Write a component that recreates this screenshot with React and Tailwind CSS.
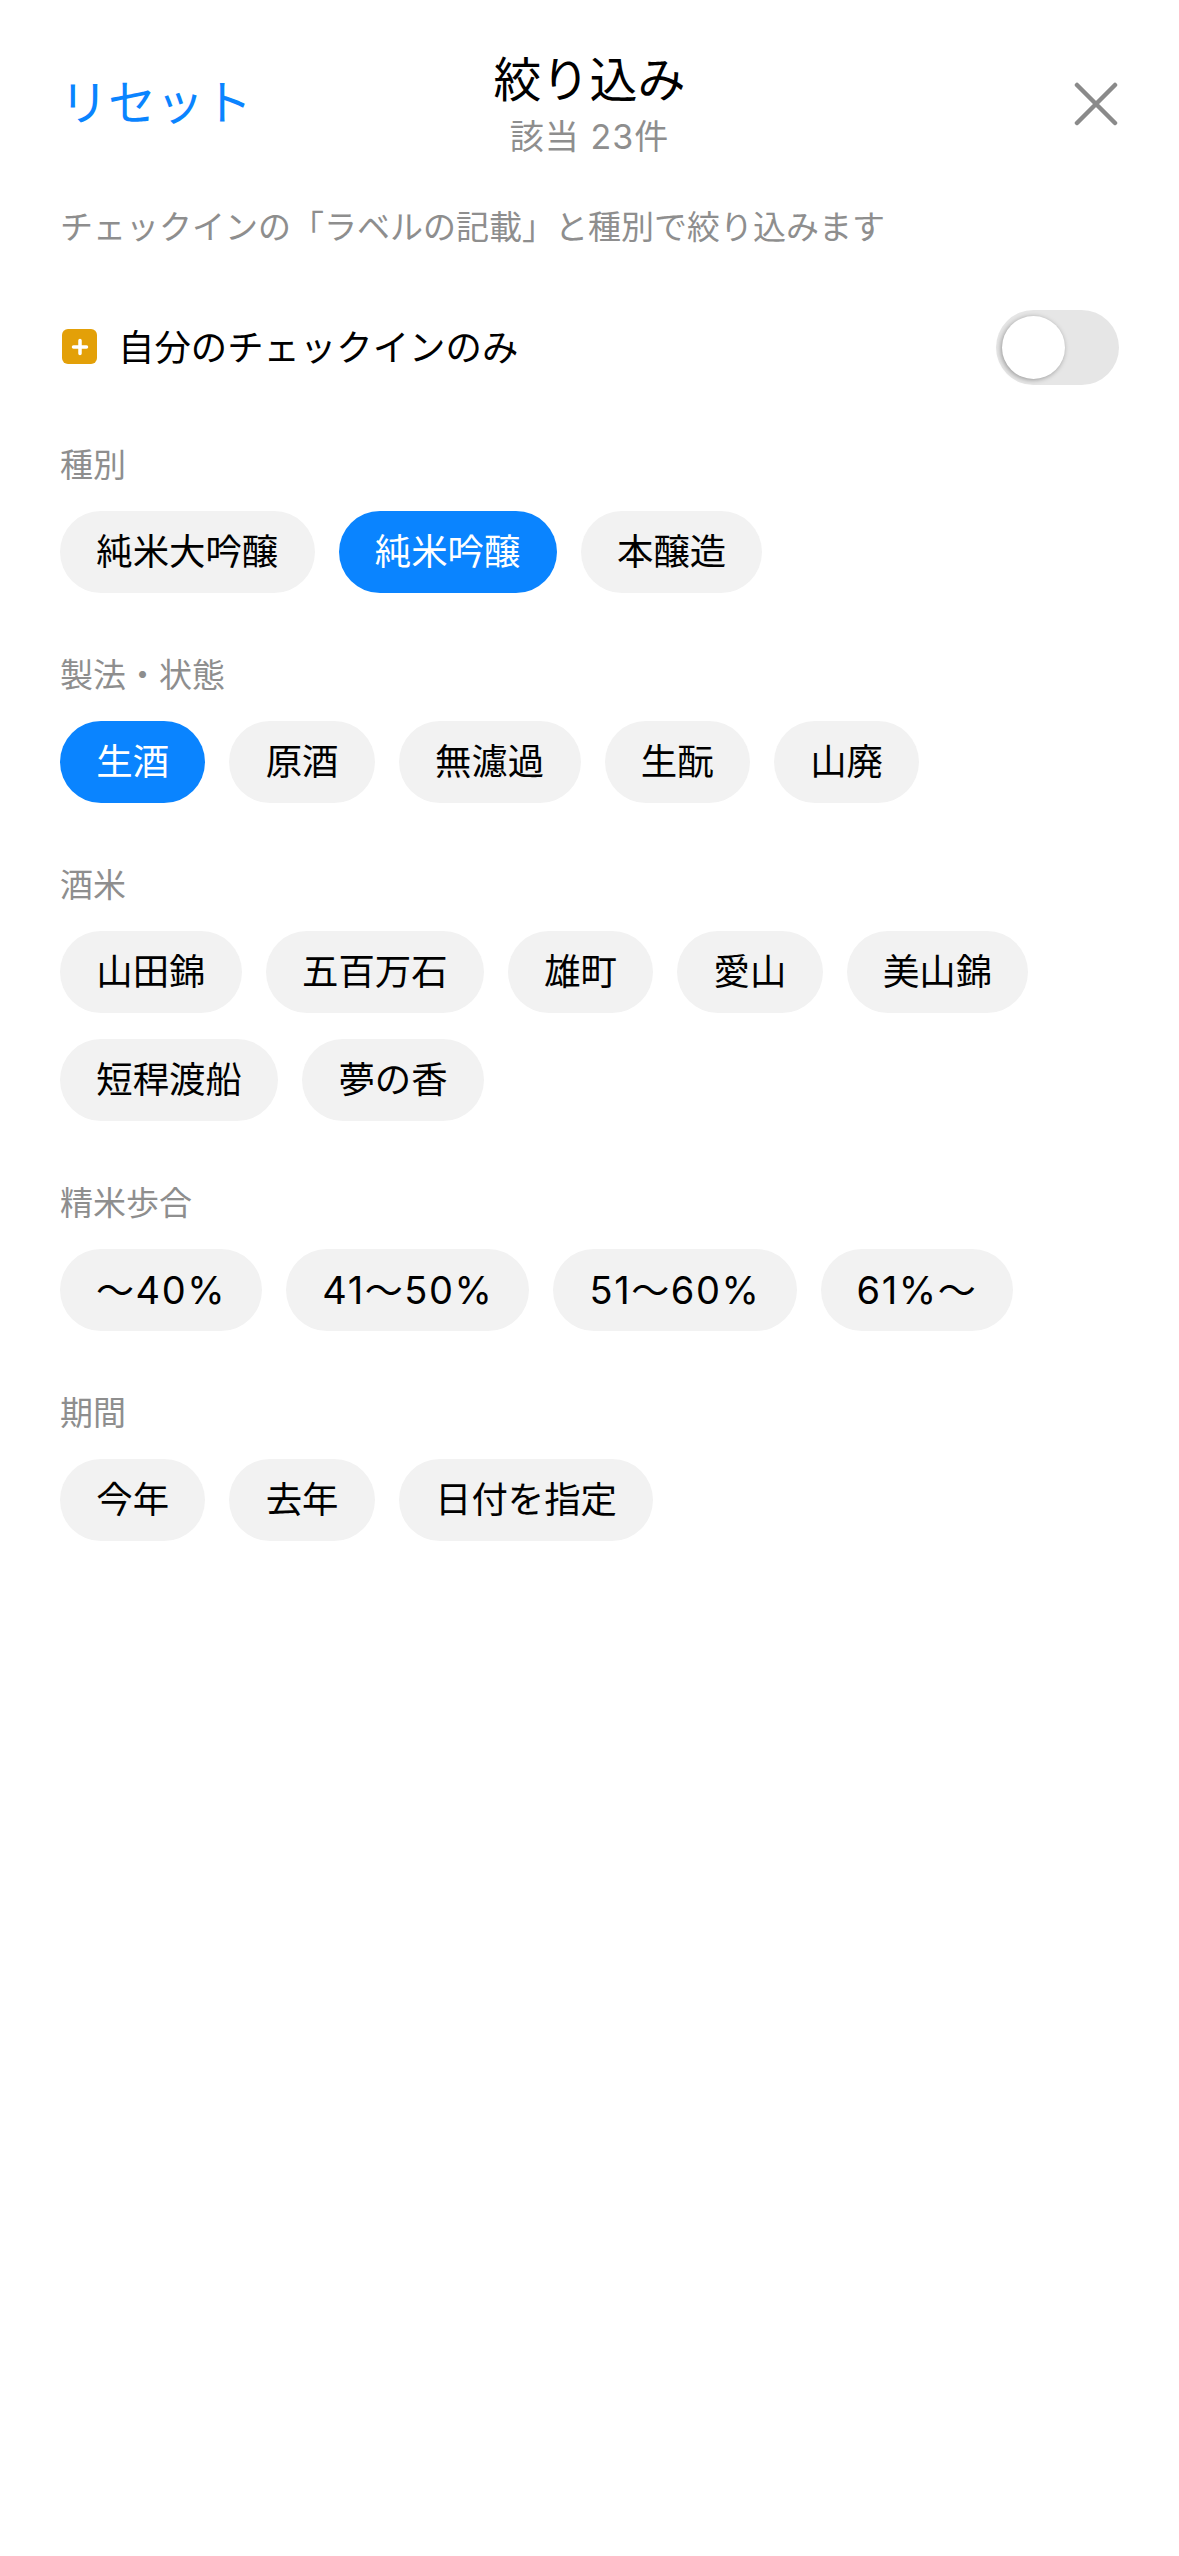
const sections = [
  { title: '種別', rows: ['純米大吟醸', '純米吟醸', '本醸造'], active: '純米吟醸' },
  { title: '製法・状態', rows: ['生酒', '原酒', '無濾過', '生酛', '山廃'], active: '生酒' },
  { title: '酒米', rows: ['山田錦', '五百万石', '雄町', '愛山', '美山錦', '短稈渡船', '夢の香'] },
  { title: '精米歩合', rows: ['～40%', '41～50%', '51～60%', '61%～'] },
  { title: '期間', rows: ['今年', '去年', '日付を指定'] },
];

function Chip({ label, active }) {
  const numeric = /\d/.test(label);
  return (
    <button type="button" className={`h-[82px] rounded-full leading-[82px] ${
      numeric ? 'px-[36px] text-[38px] tracking-[1.6px]' : 'px-[36.3px] text-[36.4px]'} ${
      active ? 'bg-[#0a84ff] text-white' : 'bg-[#f2f2f2] text-black'}`}>
      {label}
    </button>
  );
}

export default function App() {
  return (
    <div className="w-[1179px] h-[2556px] bg-white px-[60px] pt-[48px] font-['Inter','Noto_Sans_CJK_JP',sans-serif]">
      <header className="relative h-[112px] flex items-start justify-between">
        <button type="button" className="mt-[26px] text-[#0a84ff] text-[48px] leading-[58px]">リセット</button>
        <div className="absolute inset-x-0 top-0 flex flex-col items-center">
          <h1 className="mt-[2px] text-[48px] leading-[60px] text-black">絞り込み</h1>
          <p className="mt-[6px] text-[34px] leading-[42px] tracking-[1px] text-[#8e8e8e]">該当 23件</p>
        </div>
        <svg className="mt-[34px] mr-[1px]" width="44" height="44" viewBox="0 0 44 44">
          <path d="M3 3l38 38M41 3L3 41" stroke="#8a8a8a" strokeWidth="4.5" strokeLinecap="round" fill="none" />
        </svg>
      </header>

      <p className="mt-[43px] text-[33px] leading-[48px] text-[#8e8e8e]">
        チェックインの「ラベルの記載」と種別で絞り込みます
      </p>

      <div className="mt-[59px] h-[75px] flex items-center justify-between">
        <div className="flex items-center gap-[21px]">
          <span className="w-[35px] h-[35px] ml-[2px] mb-[2px] rounded-[6px] bg-[#e3a008] flex items-center justify-center">
            <svg width="18" height="18" viewBox="0 0 18 18">
              <path d="M9 2.5v13M2.5 9h13" stroke="#fff" strokeWidth="3.5" strokeLinecap="round" fill="none" />
            </svg>
          </span>
          <span className="text-[36.4px] leading-[48px] text-black">自分のチェックインのみ</span>
        </div>
        <div className="relative w-[123px] h-[75px] rounded-full bg-[#e6e6e6]">
          <span className="absolute left-[6px] top-[6px] w-[63px] h-[63px] rounded-full bg-white shadow-[-1px_1px_5px_rgba(0,0,0,0.35)]" />
        </div>
      </div>

      <div className="mt-[57px] flex flex-col gap-[59px]">
        {sections.map((s) => (
          <section key={s.title}>
            <h2 className="text-[33px] leading-[46px] text-[#8e8e8e]">{s.title}</h2>
            <div className="mt-[23px] flex flex-wrap gap-x-[24px] gap-y-[26px]">
              {s.rows.map((r) => <Chip key={r} label={r} active={r === s.active} />)}
            </div>
          </section>
        ))}
      </div>
    </div>
  );
}
